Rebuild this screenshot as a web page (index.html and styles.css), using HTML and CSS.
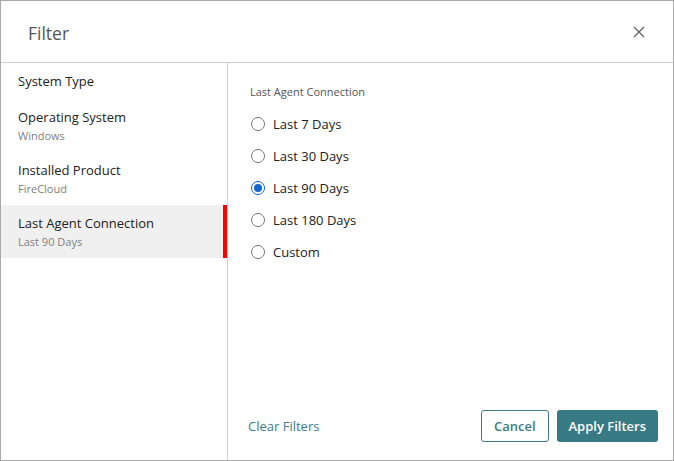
FILE: index.html
```html
<!DOCTYPE html>
<html lang="en">
<head>
    <meta charset="UTF-8">
    <title>Filter</title>
    <link rel="stylesheet" href="styles.css">
</head>
<body>
    <div class="dialog">
        <div class="header">
            <div class="header-title">Filter</div>
            <div class="close-button">
                <svg width="12" height="12" viewBox="0 0 12 12"><path d="M1 1 L11 11 M11 1 L1 11" stroke="#666" stroke-width="1.4" fill="none"/></svg>
            </div>
        </div>
        <div class="content">
            <div class="sidebar">
                <div class="filter-item">
                    <div class="filter-name">System Type</div>
                </div>
                <div class="filter-item">
                    <div class="filter-name">Operating System</div>
                    <div class="filter-value">Windows</div>
                </div>
                <div class="filter-item">
                    <div class="filter-name">Installed Product</div>
                    <div class="filter-value">FireCloud</div>
                </div>
                <div class="filter-item active">
                    <div class="filter-name">Last Agent Connection</div>
                    <div class="filter-value">Last 90 Days</div>
                </div>
            </div>
            <div class="pane">
                <div class="pane-title">Last Agent Connection</div>
                <div class="option-list">
                    <div class="option"><span class="radio"></span>Last 7 Days</div>
                    <div class="option"><span class="radio"></span>Last 30 Days</div>
                    <div class="option"><span class="radio checked"></span>Last 90 Days</div>
                    <div class="option"><span class="radio"></span>Last 180 Days</div>
                    <div class="option"><span class="radio"></span>Custom</div>
                </div>
                <div class="footer">
                    <div class="clear-link">Clear Filters</div>
                    <div class="buttons">
                        <div class="btn btn-outline">Cancel</div>
                        <div class="btn btn-primary">Apply Filters</div>
                    </div>
                </div>
            </div>
        </div>
    </div>
</body>
</html>
```

FILE: styles.css
```css
* {
    box-sizing: border-box;
}
body {
    font-family: "Open Sans", "Noto Sans", sans-serif;
    margin: 0;
    padding: 0;
    background-color: white;
    color: #222;
}
.dialog {
    width: 674px;
    height: 461px;
    border: 1px solid #a9a9a9;
    display: flex;
    flex-direction: column;
    background-color: white;
}
.header {
    height: 62px;
    flex-shrink: 0;
    border-bottom: 1px solid #cfcfcf;
    display: flex;
    justify-content: space-between;
    align-items: center;
    padding: 0 28px 0 27px;
}
.header-title {
    font-size: 17.5px;
    color: #555;
    margin-top: 2px;
}
.close-button {
    display: flex;
    margin-top: 1px;
}
.content {
    flex: 1;
    display: flex;
}
.sidebar {
    width: 227px;
    flex-shrink: 0;
    border-right: 1px solid #d4d4d4;
}
.filter-item {
    padding: 10px 17px 9px 17px;
}
.filter-name {
    font-size: 13px;
    line-height: 17px;
    color: #222;
}
.filter-value {
    font-size: 11px;
    line-height: 16px;
    color: #808080;
    margin-top: 2px;
    margin-bottom: -1px;
}
.filter-item.active {
    background-color: #f0f0f0;
    box-shadow: inset -4px 0 0 #f00;
}
.pane {
    flex: 1;
    display: flex;
    flex-direction: column;
    padding: 21px 15px 18px 20px;
}
.pane-title {
    font-size: 11px;
    line-height: 16px;
    color: #555;
    margin-left: 2px;
    margin-bottom: 15px;
}
.option-list {
    display: flex;
    flex-direction: column;
    gap: 14px;
    flex: 1;
}
.option {
    display: flex;
    align-items: center;
    font-size: 13px;
    height: 18px;
    margin-left: 2px;
    color: #222;
}
.radio {
    width: 14px;
    height: 14px;
    border: 1px solid #777;
    border-radius: 50%;
    margin-left: 1px;
    margin-right: 8px;
    display: flex;
    justify-content: center;
    align-items: center;
}
.radio.checked {
    border-color: #0f66d0;
}
.radio.checked::after {
    content: "";
    width: 8px;
    height: 8px;
    border-radius: 50%;
    background-color: #0f66d0;
}
.footer {
    display: flex;
    justify-content: space-between;
    align-items: center;
}
.clear-link {
    font-size: 13px;
    color: #3b7c87;
}
.buttons {
    display: flex;
    gap: 8px;
}
.btn {
    height: 32px;
    padding: 0 12px;
    border-radius: 3px;
    font-size: 13px;
    font-weight: 600;
    display: flex;
    align-items: center;
}
.btn-outline {
    border: 1px solid #3b7c87;
    color: #3b7c87;
    background-color: white;
}
.btn-primary {
    background-color: #377a84;
    color: white;
}
```
